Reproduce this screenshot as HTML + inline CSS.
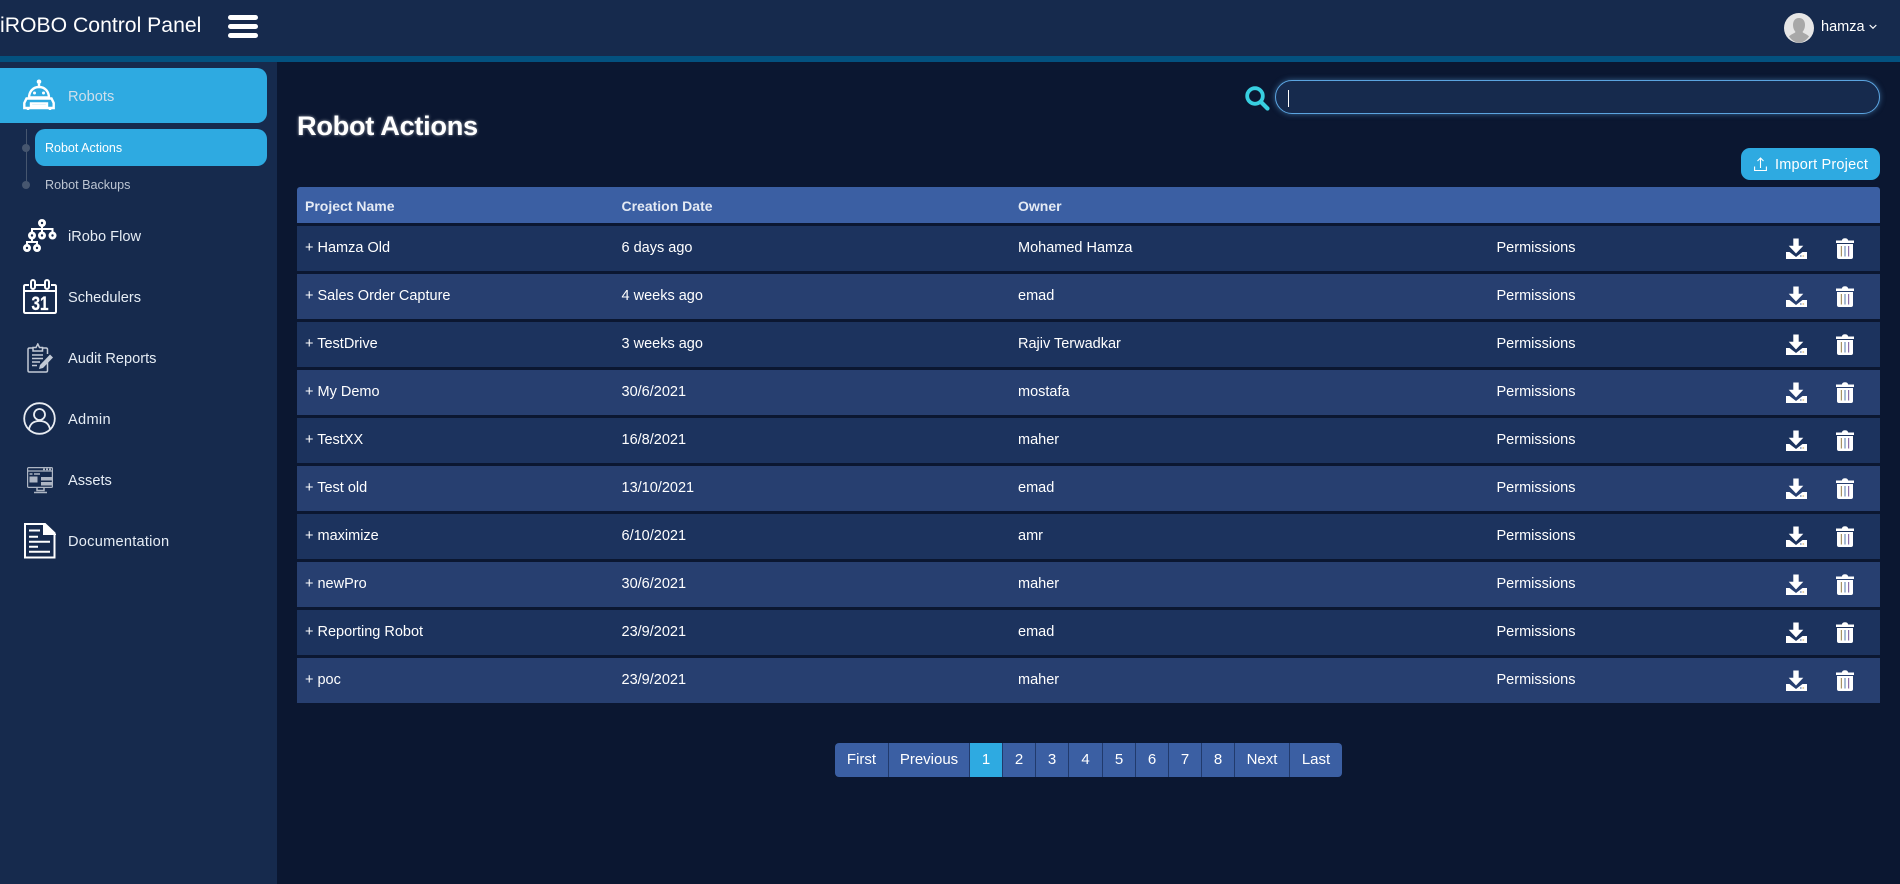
<!DOCTYPE html>
<html lang="en">
<head>
<meta charset="utf-8">
<title>iROBO Control Panel</title>
<style>
html,body{margin:0;padding:0;width:1900px;height:884px;overflow:hidden;background:#0b1731;font-family:"Liberation Sans",Arial,sans-serif;color:#fff}
.a{position:absolute}
.t{position:absolute;white-space:nowrap;line-height:20px;height:20px}
.nav{font-size:14.6px;color:#e6edf5}
.row{position:absolute;left:297px;width:1583px;height:45px}
.row span{position:absolute;top:12px;line-height:20px;font-size:14.5px;white-space:nowrap}
.row svg{position:absolute;top:12px}
.c1{left:8px}.c2{left:324.5px}.c3{left:721px}.c4{left:1199.5px}
.hd{position:absolute;top:196px;line-height:20px;font-size:14px;font-weight:bold;color:#e4eaf4;white-space:nowrap}
.pg{position:absolute;top:743px;height:34px;line-height:34px;text-align:center;background:#3b5fa3;border-right:1px solid #213a6c;box-sizing:border-box;font-size:15px;color:#fff}
</style>
</head>
<body>
<svg width="0" height="0" style="position:absolute">
<symbol id="dl" viewBox="0 0 22 21">
<path d="M7.300 0.500h5.400v7.200h4.600l-7.300 7.800-7.300-7.800h4.600z" fill="#fff"/>
<path d="M0 14h3.500l6.500 5 6.500-5H21v7H0z" fill="#fff"/>
<rect x="14" y="17.500" width="1.600" height="1" fill="#3b5fa3"/><rect x="16.500" y="17.500" width="1.600" height="1" fill="#c9a24a"/>
</symbol>
<symbol id="tr" viewBox="0 0 18 21">
<path d="M0 2.500h5.800q.6-2.200 3.200-2.200t3.200 2.200H18v2.500H0z" fill="#fff"/>
<path d="M1 6h16V19q0 2-2 2H3q-2 0-2-2z" fill="#fff"/>
<rect x="4.800" y="8" width="1.200" height="10.500" fill="#a89468"/><rect x="8.400" y="8" width="1.200" height="10.500" fill="#6d8fb8"/><rect x="12" y="8" width="1.200" height="10.500" fill="#8a6da8"/>
</symbol>
</svg>

<!-- top bar -->
<div class="a" style="left:0;top:0;width:1900px;height:56px;background:#162a4d"></div>
<div class="a" style="left:0;top:56px;width:1900px;height:6px;background:#03517f"></div>
<div class="t" style="left:0;top:15px;font-size:21.2px;line-height:22px;height:22px">iROBO Control Panel</div>
<div class="a" style="left:228px;top:15px;width:30px;height:5px;border-radius:3px;background:#fff"></div>
<div class="a" style="left:228px;top:24px;width:30px;height:5px;border-radius:3px;background:#fff"></div>
<div class="a" style="left:228px;top:33px;width:30px;height:5px;border-radius:3px;background:#fff"></div>

<svg class="a" style="left:1784px;top:13px" width="30" height="30" viewBox="0 0 30 30">
<circle cx="15" cy="15" r="15" fill="#e6e6e6"/>
<path d="M15 5c4 0 6 3 6 7 0 3-1 5-2.500 7 1 1.500 4.500 2 6.500 4.500A15 15 0 0 1 15 30 15 15 0 0 1 5 23.500c2-2.500 5.500-3 6.500-4.500C10 17 9 15 9 12c0-4 2-7 6-7z" fill="#a8a8a8"/>
</svg>
<div class="t" style="left:1821px;top:17px;font-size:14.500px">hamza</div>
<svg class="a" style="left:1869px;top:24px" width="8" height="6" viewBox="0 0 8 6"><path d="M.7 1l3.300 3.300L7.300 1" fill="none" stroke="#fff" stroke-width="1.200"/></svg>

<!-- sidebar -->
<div class="a" style="left:0;top:62px;width:277px;height:822px;background:#162a4d"></div>
<div class="a" style="left:0;top:68px;width:267px;height:55px;background:#2eaae1;border-radius:0 10px 10px 0"></div>
<div class="a" style="left:35px;top:129px;width:232px;height:37px;background:#2eaae1;border-radius:10px"></div>
<div class="a" style="left:26px;top:129px;width:1px;height:56px;background:#46566f"></div>
<div class="a" style="left:22px;top:144px;width:8px;height:8px;border-radius:50%;background:#46566f"></div>
<div class="a" style="left:22px;top:181px;width:8px;height:8px;border-radius:50%;background:#46566f"></div>

<div class="t nav" style="left:68px;top:87px;color:#cfdfeb">Robots</div>
<div class="t" style="left:45px;top:138px;font-size:12.500px;color:#fff">Robot Actions</div>
<div class="t" style="left:45px;top:175px;font-size:12.600px;color:#bcc5d2">Robot Backups</div>
<div class="t nav" style="left:68px;top:227px">iRobo Flow</div>
<div class="t nav" style="left:68px;top:288px">Schedulers</div>
<div class="t nav" style="left:68px;top:349px">Audit Reports</div>
<div class="t nav" style="left:68px;top:410px;letter-spacing:.3px">Admin</div>
<div class="t nav" style="left:68px;top:471px">Assets</div>
<div class="t nav" style="left:68px;top:532px;letter-spacing:.25px">Documentation</div>

<!-- robot icon -->
<svg class="a" style="left:23px;top:79px" width="32" height="32" viewBox="0 0 32 32" fill="none" stroke="#fff" stroke-width="2.400">
<circle cx="16" cy="2.800" r="2.300" fill="#fff" stroke="none"/><path d="M16 5v3"/>
<path d="M6 19c0-6.500 4-11 10-11s10 4.500 10 11" />
<path d="M5 18.500h22"/>
<circle cx="11.500" cy="14" r="1.500" fill="#fff" stroke="none"/><circle cx="20.500" cy="14" r="1.500" fill="#fff" stroke="none"/>
<path d="M3.500 19.500h25l2.200 4.500v5H1.300v-5z"/>
<path d="M8 29v-4.500h16V29"/><path d="M8 27h16"/>
<path d="M5 29v2M27 29v2" stroke-width="2.500"/>
</svg>
<!-- flow icon -->
<svg class="a" style="left:23px;top:219px" width="34" height="34" viewBox="0 0 34 34" fill="none" stroke="#fff" stroke-width="2.800">
<circle cx="19" cy="4" r="2.600"/><circle cx="9" cy="16.500" r="2.600"/><circle cx="19" cy="16.500" r="2.600"/><circle cx="29.500" cy="16.500" r="2.600"/><circle cx="4" cy="29" r="2.600"/><circle cx="14" cy="29" r="2.600"/>
<path d="M19 7v6.500M9 13.500v-3.500h20.500v3.500M9 19.500v3.500M4 26v-3h10v3" stroke-width="2"/>
</svg>
<!-- calendar -->
<svg class="a" style="left:23px;top:279px" width="34" height="35" viewBox="0 0 34 35" fill="none" stroke="#fff" stroke-width="2">
<path d="M6 6H2.500Q1 6 1 7.500V32.500Q1 34 2.500 34H31.500Q33 34 33 32.500V7.500Q33 6 31.500 6H28M13 6h8"/>
<rect x="8" y="1" width="4" height="9" rx="2"/><rect x="22" y="1" width="4" height="9" rx="2"/>
<path d="M1 12h32"/>
<text x="17" y="31" text-anchor="middle" font-family="Liberation Sans,sans-serif" font-size="19" font-weight="bold" fill="#fff" stroke="#fff" stroke-width=".3" textLength="17" lengthAdjust="spacingAndGlyphs">31</text>
</svg>
<!-- audit -->
<svg class="a" style="left:27px;top:343px" width="27" height="30" viewBox="0 0 27 30" fill="none" stroke="#c3cad6" stroke-width="1.500">
<path d="M6 5H2.500Q1 5 1 6.500V27.500Q1 29 2.500 29H19Q20.500 29 20.500 27.500V19M20.500 11V6.500Q20.500 5 19 5H15.500"/>
<path d="M6 8V4.500h3L10.800 1l1.700 3.500h3V8z"/>
<path d="M5 12h11M5 15.500h11M5 19h8M5 22.500h5"/>
<path d="M12 26l1-4L23 11.500l3 3L16 25z" fill="#c3cad6" stroke="none"/>
</svg>
<!-- admin -->
<svg class="a" style="left:23px;top:402px" width="33" height="33" viewBox="0 0 33 33" fill="none" stroke="#e8ecf2" stroke-width="1.800">
<circle cx="16.500" cy="16.500" r="15.300"/><circle cx="16.500" cy="12.500" r="5.500"/>
<path d="M6 27.500c1-6 5-8.500 10.500-8.500s9.500 2.500 10.500 8.500"/>
</svg>
<!-- assets -->
<svg class="a" style="left:27px;top:467px" width="26" height="27" viewBox="0 0 26 27" fill="none" stroke="#aeb6c4" stroke-width="1.200">
<rect x=".6" y=".6" width="24.800" height="19.800" rx="1"/>
<path d="M.6 4h24.800"/><path d="M16 2.300h8" stroke-width="1.800" stroke-dasharray="2 1"/>
<rect x="2.500" y="9.500" width="8" height="6" fill="#aeb6c4" stroke="none"/>
<path d="M2.500 7h3M7 7h6"  stroke-width="1.500"/>
<rect x="14" y="10" width="11" height="3.500" fill="#aeb6c4" stroke="none"/><rect x="14" y="15" width="11" height="3.500" fill="#aeb6c4" stroke="none"/>
<path d="M10 21v2.500h7V21M7 25.500h13" stroke-width="1.500"/>
</svg>
<!-- doc -->
<svg class="a" style="left:24px;top:523px" width="32" height="36" viewBox="0 0 32 36" fill="none" stroke="#fff" stroke-width="2">
<path d="M1 1h20l9.500 9V34.500H1z"/><path d="M20 1l10.500 10H20z" fill="#fff"/>
<path d="M5 7.500h11" stroke-width="2"/>
<path d="M5 13.700h9M5 18.700h21M5 23.700h9M5 28.700h21" stroke-width="2"/>
</svg>

<!-- main -->
<div class="t" style="left:297px;top:109px;height:34px;line-height:34px;font-size:27.200px;font-weight:bold;letter-spacing:-.3px;text-shadow:0 0 3px rgba(255,255,255,.55)">Robot Actions</div>

<svg class="a" style="left:1245px;top:86px" width="25" height="25" viewBox="0 0 25 25" fill="none" stroke="#38cfe0">
<circle cx="10" cy="10" r="7.800" stroke-width="3.800"/><path d="M16 16l6.500 6.500" stroke-width="4.200" stroke-linecap="round"/>
</svg>
<div class="a" style="left:1275px;top:80px;width:605px;height:34px;box-sizing:border-box;background:#162a4d;border:1px solid #5ba4e0;border-radius:17px;box-shadow:0 0 6px rgba(91,164,224,.55)"></div>
<div class="a" style="left:1288px;top:90px;width:1px;height:17px;background:#fff"></div>

<div class="a" style="left:1741px;top:148px;width:139px;height:32px;background:#2eaae1;border-radius:9px"></div>
<svg class="a" style="left:1754px;top:157px" width="13" height="14" viewBox="0 0 13 14" fill="none" stroke="#fff" stroke-width="1.100">
<path d="M6.500 11V1M3.500 4l3-3 3 3M.6 9.500v4h11.800v-4"/>
</svg>
<div class="t" style="left:1775px;top:155px;font-size:14.500px;letter-spacing:.2px">Import Project</div>

<!-- table head -->
<div class="a" style="left:297px;top:187px;width:1583px;height:36px;background:#3b5fa3;border-radius:3px 3px 0 0"></div>
<div class="hd" style="left:305px">Project Name</div>
<div class="hd" style="left:621.500px">Creation Date</div>
<div class="hd" style="left:1018px">Owner</div>

<div class="row" style="top:226px;background:#1c335e"><span class="c1">+ Hamza Old</span><span class="c2">6 days ago</span><span class="c3">Mohamed Hamza</span><span class="c4">Permissions</span><svg style="left:1489px" width="22" height="21"><use href="#dl"/></svg><svg style="left:1539px" width="18" height="21"><use href="#tr"/></svg></div>
<div class="row" style="top:274px;background:#273f70"><span class="c1">+ Sales Order Capture</span><span class="c2">4 weeks ago</span><span class="c3">emad</span><span class="c4">Permissions</span><svg style="left:1489px" width="22" height="21"><use href="#dl"/></svg><svg style="left:1539px" width="18" height="21"><use href="#tr"/></svg></div>
<div class="row" style="top:322px;background:#1c335e"><span class="c1">+ TestDrive</span><span class="c2">3 weeks ago</span><span class="c3">Rajiv Terwadkar</span><span class="c4">Permissions</span><svg style="left:1489px" width="22" height="21"><use href="#dl"/></svg><svg style="left:1539px" width="18" height="21"><use href="#tr"/></svg></div>
<div class="row" style="top:370px;background:#273f70"><span class="c1">+ My Demo</span><span class="c2">30/6/2021</span><span class="c3">mostafa</span><span class="c4">Permissions</span><svg style="left:1489px" width="22" height="21"><use href="#dl"/></svg><svg style="left:1539px" width="18" height="21"><use href="#tr"/></svg></div>
<div class="row" style="top:418px;background:#1c335e"><span class="c1">+ TestXX</span><span class="c2">16/8/2021</span><span class="c3">maher</span><span class="c4">Permissions</span><svg style="left:1489px" width="22" height="21"><use href="#dl"/></svg><svg style="left:1539px" width="18" height="21"><use href="#tr"/></svg></div>
<div class="row" style="top:466px;background:#273f70"><span class="c1">+ Test old</span><span class="c2">13/10/2021</span><span class="c3">emad</span><span class="c4">Permissions</span><svg style="left:1489px" width="22" height="21"><use href="#dl"/></svg><svg style="left:1539px" width="18" height="21"><use href="#tr"/></svg></div>
<div class="row" style="top:514px;background:#1c335e"><span class="c1">+ maximize</span><span class="c2">6/10/2021</span><span class="c3">amr</span><span class="c4">Permissions</span><svg style="left:1489px" width="22" height="21"><use href="#dl"/></svg><svg style="left:1539px" width="18" height="21"><use href="#tr"/></svg></div>
<div class="row" style="top:562px;background:#273f70"><span class="c1">+ newPro</span><span class="c2">30/6/2021</span><span class="c3">maher</span><span class="c4">Permissions</span><svg style="left:1489px" width="22" height="21"><use href="#dl"/></svg><svg style="left:1539px" width="18" height="21"><use href="#tr"/></svg></div>
<div class="row" style="top:610px;background:#1c335e"><span class="c1">+ Reporting Robot</span><span class="c2">23/9/2021</span><span class="c3">emad</span><span class="c4">Permissions</span><svg style="left:1489px" width="22" height="21"><use href="#dl"/></svg><svg style="left:1539px" width="18" height="21"><use href="#tr"/></svg></div>
<div class="row" style="top:658px;background:#273f70"><span class="c1">+ poc</span><span class="c2">23/9/2021</span><span class="c3">maher</span><span class="c4">Permissions</span><svg style="left:1489px" width="22" height="21"><use href="#dl"/></svg><svg style="left:1539px" width="18" height="21"><use href="#tr"/></svg></div>

<!-- pagination -->
<div class="pg" style="left:835px;width:54px;border-radius:4px 0 0 4px">First</div>
<div class="pg" style="left:889px;width:81px">Previous</div>
<div class="pg" style="left:970px;width:33px;background:#2eaae1">1</div>
<div class="pg" style="left:1003px;width:33px">2</div>
<div class="pg" style="left:1036px;width:33px">3</div>
<div class="pg" style="left:1069px;width:34px">4</div>
<div class="pg" style="left:1103px;width:33px">5</div>
<div class="pg" style="left:1136px;width:33px">6</div>
<div class="pg" style="left:1169px;width:33px">7</div>
<div class="pg" style="left:1202px;width:33px">8</div>
<div class="pg" style="left:1235px;width:55px">Next</div>
<div class="pg" style="left:1290px;width:52px;border-radius:0 4px 4px 0;border-right:0">Last</div>
</body>
</html>
